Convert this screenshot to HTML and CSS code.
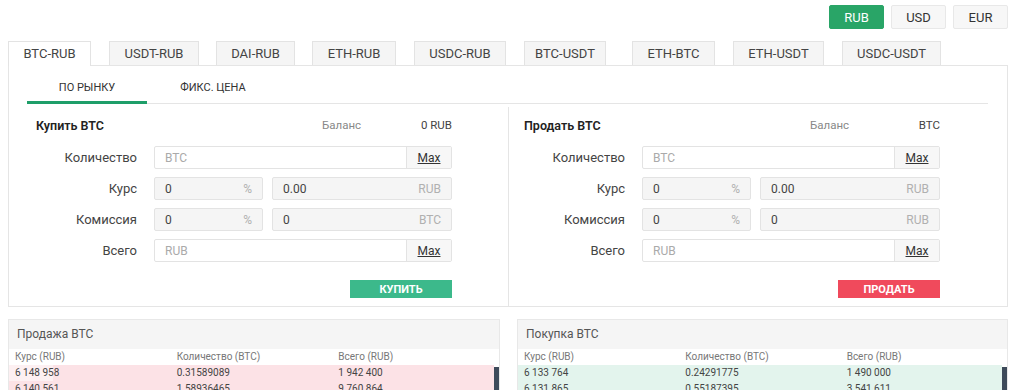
FILE: index.html
```html
<!DOCTYPE html>
<html lang="ru">
<head>
    <meta charset="UTF-8">
    <meta name="viewport" content="width=device-width, initial-scale=1.0">
    <title>Обмен</title>
    <link rel="stylesheet" href="styles.css">
</head>
<body>
<div class="page">
    <div class="currency">
        <button class="cur active">RUB</button>
        <button class="cur">USD</button>
        <button class="cur">EUR</button>
    </div>

    <ul class="pairs">
        <li class="pair active">BTC-RUB</li>
        <li class="pair">USDT-RUB</li>
        <li class="pair">DAI-RUB</li>
        <li class="pair">ETH-RUB</li>
        <li class="pair">USDC-RUB</li>
        <li class="pair">BTC-USDT</li>
        <li class="pair">ETH-BTC</li>
        <li class="pair">ETH-USDT</li>
        <li class="pair">USDC-USDT</li>
    </ul>

    <div class="trade">
        <div class="modes">
            <span class="mode active">По рынку</span>
            <span class="mode">Фикс. цена</span>
        </div>

        <div class="forms">
            <div class="side buy">
                <div class="side-head">
                    <strong>Купить BTC</strong>
                    <span class="balance"><span>Баланс</span><span class="bal-val">0 RUB</span></span>
                </div>
                <div class="row">
                    <label>Количество</label>
                    <div class="field"><span class="ph">BTC</span><span class="max">Max</span></div>
                </div>
                <div class="row">
                    <label>Курс</label>
                    <div class="split">
                        <div class="field ro small"><span class="val">0</span><span class="unit">%</span></div>
                        <div class="field ro"><span class="val">0.00</span><span class="unit">RUB</span></div>
                    </div>
                </div>
                <div class="row">
                    <label>Комиссия</label>
                    <div class="split">
                        <div class="field ro small"><span class="val">0</span><span class="unit">%</span></div>
                        <div class="field ro"><span class="val">0</span><span class="unit">BTC</span></div>
                    </div>
                </div>
                <div class="row">
                    <label>Всего</label>
                    <div class="field"><span class="ph">RUB</span><span class="max">Max</span></div>
                </div>
                <div class="actions"><button class="btn btn-buy">Купить</button></div>
            </div>

            <div class="side sell">
                <div class="side-head">
                    <strong>Продать BTC</strong>
                    <span class="balance"><span>Баланс</span><span class="bal-val">BTC</span></span>
                </div>
                <div class="row">
                    <label>Количество</label>
                    <div class="field"><span class="ph">BTC</span><span class="max">Max</span></div>
                </div>
                <div class="row">
                    <label>Курс</label>
                    <div class="split">
                        <div class="field ro small"><span class="val">0</span><span class="unit">%</span></div>
                        <div class="field ro"><span class="val">0.00</span><span class="unit">RUB</span></div>
                    </div>
                </div>
                <div class="row">
                    <label>Комиссия</label>
                    <div class="split">
                        <div class="field ro small"><span class="val">0</span><span class="unit">%</span></div>
                        <div class="field ro"><span class="val">0</span><span class="unit">RUB</span></div>
                    </div>
                </div>
                <div class="row">
                    <label>Всего</label>
                    <div class="field"><span class="ph">RUB</span><span class="max">Max</span></div>
                </div>
                <div class="actions"><button class="btn btn-sell">Продать</button></div>
            </div>
        </div>
    </div>

    <div class="books">
        <div class="book asks">
            <div class="book-head">Продажа BTC</div>
            <div class="cols"><span>Курс (RUB)</span><span>Количество (BTC)</span><span>Всего (RUB)</span></div>
            <div class="book-body">
                <div class="rows">
                    <div class="line" style="--depth: 91%"><span>6 148 958</span><span>0.31589089</span><span>1 942 400</span></div>
                    <div class="line" style="--depth: 100%"><span>6 140 561</span><span>1.58936465</span><span>9 760 864</span></div>
                </div>
                <div class="scroll"></div>
            </div>
        </div>
        <div class="book bids">
            <div class="book-head">Покупка BTC</div>
            <div class="cols"><span>Курс (RUB)</span><span>Количество (BTC)</span><span>Всего (RUB)</span></div>
            <div class="book-body">
                <div class="rows">
                    <div class="line"><span>6 133 764</span><span>0.24291775</span><span>1 490 000</span></div>
                    <div class="line"><span>6 131 865</span><span>0.55187395</span><span>3 541 611</span></div>
                </div>
                <div class="scroll"></div>
            </div>
        </div>
    </div>
</div>
</body>
</html>
```

FILE: styles.css
```css
body {
    margin: 0;
    font-family: Roboto, 'Liberation Sans', sans-serif;
    color: #333;
    background-color: #fff;
    overflow: hidden;
}

.page {
    width: 1000px;
    padding: 5px 16px 0 8px;
}

/* валюта */
.currency {
    display: flex;
    justify-content: flex-end;
    gap: 7px;
}

.cur {
    width: 55px;
    height: 24px;
    padding: 0;
    font-family: inherit;
    font-size: 13px;
    color: #333;
    background-color: #f7f7f7;
    border: 1px solid #e8e8e8;
    border-radius: 2px;
}

.cur.active {
    background-color: #29a567;
    border-color: #29a567;
    color: #fff;
}

/* пары */
.pairs {
    display: flex;
    gap: 18px;
    margin: 12px 0 0;
    padding: 0;
    list-style: none;
}

.pair {
    box-sizing: border-box;
    height: 24px;
    line-height: 23px;
    padding: 0;
    text-align: center;
    font-size: 13px;
    color: #444;
    background-color: #f5f5f5;
    border: 1px solid #e3e3e3;
    border-bottom: none;
}

.pair:nth-child(1) { width: 83px; }
.pair:nth-child(2) { width: 90px; }
.pair:nth-child(3) { width: 79px; margin-left: -1px; }
.pair:nth-child(4) { width: 84px; margin-left: -1px; }
.pair:nth-child(5) { width: 92px; }
.pair:nth-child(6) { width: 82px; }
.pair:nth-child(7) { width: 83px; margin-left: 8px; }
.pair:nth-child(8) { width: 91px; }
.pair:nth-child(9) { width: 99px; }

.pair.active {
    position: relative;
    z-index: 1;
    height: 25px;
    margin-bottom: -1px;
    background-color: #fff;
}

.trade {
    border: 1px solid #e5e5e5;
}

.modes {
    display: flex;
    margin: 8px 19px 0 18px;
    border-bottom: 1px solid #e5e5e5;
}

.mode {
    box-sizing: border-box;
    width: 120px;
    height: 29px;
    line-height: 27px;
    text-align: center;
    font-size: 11px;
    color: #333;
    text-transform: uppercase;
}

.mode + .mode {
    width: 132px;
}

.mode.active {
    height: 30px;
    margin-bottom: -1px;
    border-bottom: 3px solid #1e9e69;
}

.forms {
    display: flex;
    margin-top: 3px;
}

.side {
    box-sizing: border-box;
    width: 499px;
    padding: 8px 0 8px 27px;
}

.side.sell {
    flex: 1;
    padding-left: 15px;
    border-left: 1px solid #e5e5e5;
}

.side-head, .row, .actions {
    width: 416px;
}

.side-head {
    display: flex;
    align-items: center;
    height: 20px;
    margin-bottom: 11px;
}

.side-head strong {
    flex: 1;
    font-size: 12.5px;
    font-weight: 600;
    color: #222;
}

.balance {
    display: flex;
    justify-content: space-between;
    width: 130px;
    font-size: 11.5px;
    color: #888;
}

.bal-val {
    color: #444;
}

.row {
    display: flex;
    align-items: center;
    height: 23px;
    margin-bottom: 8px;
}

.row label {
    width: 101px;
    margin-right: 17px;
    text-align: right;
    font-size: 13px;
    color: #444;
}

.field {
    box-sizing: border-box;
    flex: 1;
    display: flex;
    align-items: center;
    height: 23px;
    font-size: 12px;
    background-color: #fff;
    border: 1px solid #e3e3e3;
    border-radius: 2px;
}

.split {
    flex: 1;
    display: flex;
    gap: 9px;
}

.field.ro {
    background-color: #f5f5f5;
}

.field.small {
    flex: 0 0 109px;
}

.ph {
    flex: 1;
    padding-left: 10px;
    color: #aaa;
}

.val {
    flex: 1;
    padding-left: 10px;
    color: #444;
}

.unit {
    padding-right: 10px;
    color: #b0b0b0;
}

.max {
    align-self: stretch;
    display: flex;
    align-items: center;
    justify-content: center;
    width: 44px;
    color: #333;
    text-decoration: underline;
    background-color: #f7f7f7;
    border-left: 1px solid #e3e3e3;
}

.actions {
    display: flex;
    justify-content: flex-end;
    margin-top: 18px;
}

.btn {
    width: 102px;
    height: 18px;
    padding: 0;
    font-family: inherit;
    font-size: 11px;
    font-weight: 700;
    color: #fff;
    text-transform: uppercase;
    border: none;
}

.btn-buy {
    background-color: #3cb98b;
}

.btn-sell {
    background-color: #f04a5c;
}

/* стаканы */
.books {
    display: flex;
    gap: 17px;
    margin-top: 12px;
}

.book {
    width: 492px;
    border: 1px solid #e8e8e8;
}

.book.bids {
    width: 491px;
}

.book-head {
    height: 29px;
    line-height: 29px;
    padding-left: 8px;
    font-size: 12px;
    color: #555;
    background-color: #f5f5f5;
}

.cols, .line {
    display: grid;
    grid-template-columns: repeat(3, 1fr);
    height: 16px;
    line-height: 16px;
    font-size: 10px;
}

.cols {
    margin-right: 5px;
    color: #777;
}

.cols span, .line span {
    padding-left: 6px;
}

.book-body {
    display: flex;
}

.rows {
    flex: 1;
}

.asks .line {
    color: #444;
    background: linear-gradient(to left, #fce2e6 var(--depth), #fdf0f2 var(--depth));
}

.bids .line {
    color: #444;
    background-color: #e3f4ed;
}

.scroll {
    width: 5px;
    margin-top: 2px;
    background-color: #3e4a5a;
}
```
